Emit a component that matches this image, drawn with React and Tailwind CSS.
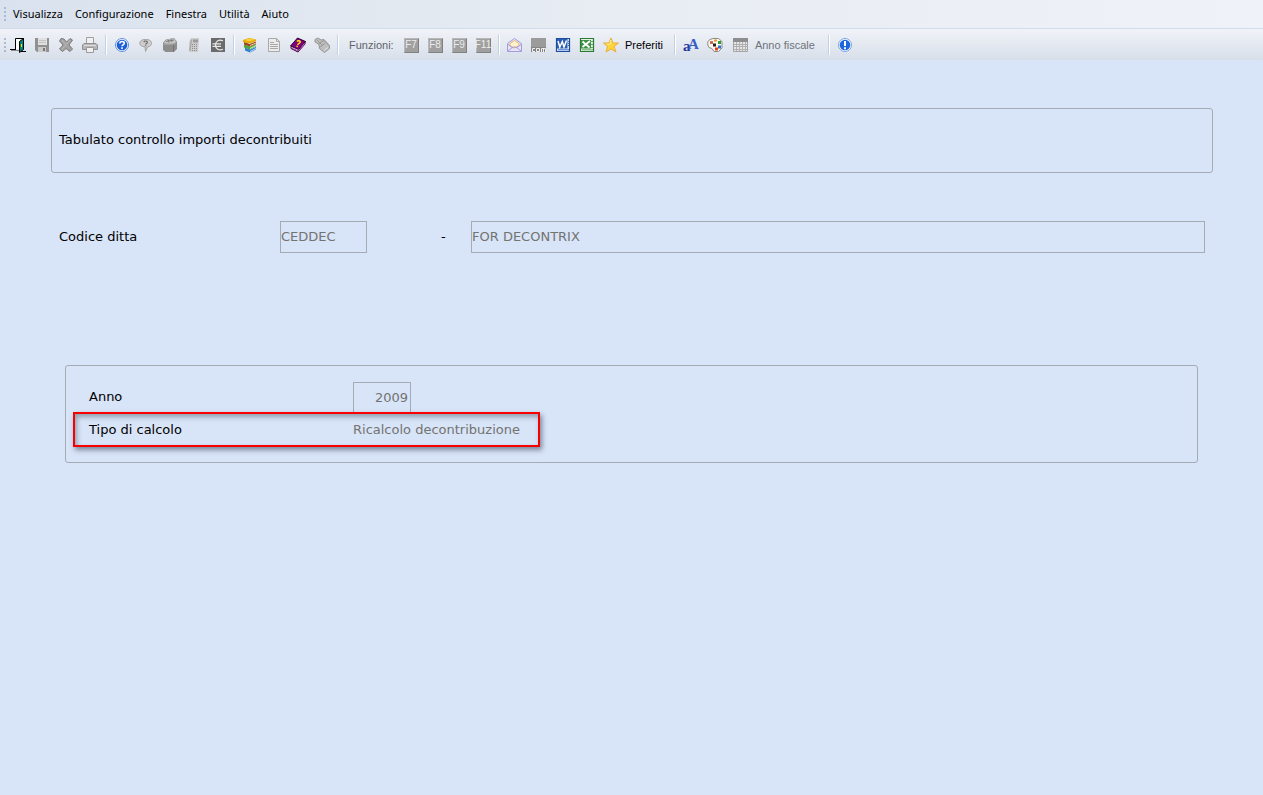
import React from 'react';
import clsx from 'clsx';

const MENU_ITEMS = ['Visualizza', 'Configurazione', 'Finestra', 'Utilità', 'Aiuto'];

/* Toolbar icons */

function Icon({ children }) {
  return (
    <svg className="w-4 h-4 shrink-0" viewBox="0 0 16 16" fill="none" aria-hidden="true">
      {children}
    </svg>
  );
}

const ExitIcon = () => (
  <Icon>
    <path d="M5 2h5v10H5z" fill="#fff" />
    <path d="M5.500 12V1.500h8V12" stroke="#000" />
    <path d="M0 12.500h6M11 14.500h5" stroke="#000" />
    <path d="M1 13.500h9" stroke="#8c8c8c" />
    <path d="M9.500 4.500 13.500 1.500V12.500L9.500 15.500Z" fill="#078080" stroke="#000" />
    <path d="M11 7h1v3h-1z" fill="#ffe800" />
  </Icon>
);

const SaveIcon = () => (
  <Icon>
    <path d="M1 1h14v14H3l-2-2Z" fill="#919191" />
    <path d="M4 1h9v7H4z" fill="#e0e0e0" />
    <path d="M4 10h8v5H4z" fill="#c9c9c9" />
    <path d="M9 11h2v3H9z" fill="#777" />
    <path d="M5 3.500h7M5 5.500h7" stroke="#c4c4c4" />
  </Icon>
);

const DeleteIcon = () => (
  <Icon>
    <path d="M3 1.500 6 2l2.500 3L12 1.500l2.500 1.500-3.500 5 3.500 4-2.500 2.500-4-3-3.500 3L1.500 12 5 8 1.500 4Z" fill="#a3a3a3" stroke="#7c7c7c" strokeLinejoin="round" />
    <path d="m4 3 4 5M12 3 4 12" stroke="#b8b8b8" />
  </Icon>
);

const PrintIcon = () => (
  <Icon>
    <path d="M4.500.5h7v6h-7z" fill="#f0f0f0" stroke="#a0a0a0" />
    <path d="M2 6.500h12l1.500 1.500V12.500H.5V8Z" fill="#b8b8b8" stroke="#909090" />
    <path d="M2 8.500h12" stroke="#ddd" />
    <path d="M4.500 10.500h7v5h-7z" fill="#f0f0f0" stroke="#999" />
  </Icon>
);

const HelpIcon = () => (
  <Icon>
    <circle cx="8" cy="8" r="6.500" fill="#fff" stroke="#5b8ce2" />
    <circle cx="8" cy="8" r="5.300" fill="#1d5fd6" />
    <path d="M5.800 6.500C5.800 3.900 10.300 4 10.300 6.300 10.300 8 8 7.800 8 9.300M8 10.300V12" stroke="#fff" strokeWidth="1.600" />
  </Icon>
);

const HintIcon = () => (
  <Icon>
    <path d="M7.500 2.500c4 0 6 1.300 6 3.800 0 2-1.500 3.200-4 3.700L7.500 14.500 7 10C3.500 9.500 1.800 8.300 1.800 6.300c0-2.500 2-3.800 5.700-3.800Z" fill="#cdcdcd" stroke="#a2a2a2" />
    <path d="M6 5.300C6 3.500 9.300 3.600 9.300 5.400 9.300 6.600 7.700 6.400 7.700 7.600M7.700 8.300v1" stroke="#666" strokeWidth="1.200" />
  </Icon>
);

const ArchiveIcon = () => (
  <Icon>
    <path d="M1 5.500 4 2.500 12 1l3 3.500V12l-3 3H3.500L1 13Z" fill="#8d8d8d" />
    <path d="m2 5.500 3-3 7-1 2 3-2.500 2H3.500Z" fill="#c6c6c6" />
    <path d="m4 4.500 8-1.500M6 2.500l1 3M9 2l1 3" stroke="#7b7b7b" />
    <path d="M1.500 7H11.500l3-2" stroke="#b5b5b5" />
    <path d="M11.500 7.500v7" stroke="#757575" />
  </Icon>
);

const PhoneIcon = () => (
  <Icon>
    <path d="M5 1h8v1l-1 13H4l-1-1V5Z" fill="#cdcdcd" />
    <path d="M7 2.500h5v3H7z" fill="#9b9b9b" />
    <path d="M5.500 2.500 3.800 14" stroke="#a8a8a8" strokeWidth="1.500" />
    <path d="M6 7.500h6M6 9.500h6M6 11.500h6M6 13.500h5" stroke="#8a8a8a" strokeDasharray="1 1" />
  </Icon>
);

const EuroIcon = () => (
  <Icon>
    <path d="M1 1h14v14H1z" fill="#6b6b6b" />
    <path d="M13 3.700C9 2 5.500 4 5.500 8s3.500 6 7.500 4.300M2.500 6.800h8.500M2.500 9.300h8.500" stroke="#e8e8e8" strokeWidth="1.200" />
  </Icon>
);

const BooksIcon = () => (
  <Icon>
    <path d="m3 10.500 5 2 6-2.500v2.500L8 15.500l-5-2Z" fill="#2f7fd0" />
    <path d="m8 14.500 6-3" stroke="#b9dcf5" />
    <path d="m2 7.500 6 2 6-2.500v2.500L8 12.500 2 10.500Z" fill="#4fa53c" />
    <path d="m8 11.500 6-3" stroke="#d9edc6" />
    <path d="m2 5 5.500 2L14 4.500V7L8 9.500 2 7.500Z" fill="#96421f" />
    <path d="m8 8.500 6-2.500" stroke="#f0cfa8" />
    <path d="m1 3 6-2 7 1.500V4L7.500 6.500 1 5Z" fill="#e5a900" />
    <path d="m2 3 5.500-1.500L13 2.700 7.500 4.500Z" fill="#f8cf3f" />
  </Icon>
);

const DocumentIcon = () => (
  <Icon>
    <path d="M2.500 1.500h8l3 3v10h-11Z" fill="#ececec" stroke="#a8a8a8" />
    <path d="M10.500 1.500v3h3M4 5.500h4M4 7.500h8M4 9.500h8M4 11.500h8" stroke="#a8a8a8" />
  </Icon>
);

const ManualIcon = () => (
  <Icon>
    <path d="M1 9.500v2L8 15l7-8V4.500" fill="#fff" stroke="#200020" />
    <path d="M.5 9 7.500 1l8 3.500L8.500 12.500Z" fill="#820082" stroke="#2c002c" />
    <path d="m1.500 11 7 3 6.500-7.500" stroke="#b02ab0" />
    <path d="M7 4.500c1-1.500 4-.7 3 1C9.500 6.500 8 6.300 7.800 7.800M7.300 8.700 7 10" stroke="#ffe500" strokeWidth="1.500" />
  </Icon>
);

const TagsIcon = () => (
  <Icon>
    <path d="M1 2.500 4 1l3 2 3-.5 5.500 6v3l-5 4-5-4L5 7.500 1 5Z" fill="#bebebe" stroke="#959595" />
    <path d="m5 6.500 5-3 5 5M6 10l5-3.500M3 3l5 5" stroke="#999" />
    <path d="m10 13.500 4-3" stroke="#e2e2e2" />
  </Icon>
);

const MailIcon = () => (
  <Icon>
    <path d="M.5 6.500 7.500 1.500l7 5v8H.5Z" fill="#e7e3fb" stroke="#a59cdc" strokeLinejoin="round" />
    <path d="M3 6.500 7.500 3.500l4.500 3v2.500l-4.500 2-4.500-2Z" fill="#fff2cd" stroke="#e5bb73" />
    <path d="m1 14 5-4h3l5 4M1 7.500 6 11M14 7.500 9 11" stroke="#a59cdc" />
  </Icon>
);

const ComIcon = () => (
  <Icon>
    <path d="M0 1h15v9H0z" fill="#9b9b9b" />
    <path d="M0 10h15v5H0z" fill="#858585" />
    <path d="M4 11.500H1.500v3H4M5.500 11.500h3v3h-3zM10.500 15v-3.500h4V15M12.500 11.500V15" stroke="#f0f0f0" />
  </Icon>
);

const WordIcon = () => (
  <Icon>
    <path d="M1.500 1.500h13v13h-13z" fill="#e9f0fb" stroke="#1d4c9c" strokeWidth="1.200" />
    <path d="M2 2h10.500v9.500H2z" fill="#2a5db4" />
    <path d="m3 4 1.800 6L7.300 4.500 9 10l2.500-6.500" stroke="#fff" strokeWidth="1.500" />
    <path d="M13 4.500h1M13 6.500h1M13 8.500h1M3 12.800h11" stroke="#3c6fc0" />
  </Icon>
);

const ExcelIcon = () => (
  <Icon>
    <path d="M1.500 1.500h13v13h-13z" fill="#e4f3e2" stroke="#2c7b35" strokeWidth="1.200" />
    <path d="M2 3h10v8.500H2z" fill="#3f9147" />
    <path d="m3.500 4.500 7 6M11 4 3.500 10" stroke="#fff" strokeWidth="1.800" />
    <path d="M12 4.500h2M12 7.500h2M12 10.500h2M3 12.800h11" stroke="#69aa6b" />
  </Icon>
);

const StarIcon = () => (
  <Icon>
    <path d="m8 1 2 5h5.500L11 9.500l2 5.500-5-3-5 3 1.500-5.500L.5 6H6Z" fill="#ffd53b" stroke="#eaae3a" strokeLinejoin="round" />
    <path d="m8 3-1 4-3 .5" stroke="#fff1a0" />
  </Icon>
);

const FontIcon = () => (
  <Icon>
    <text x="0" y="14" fontFamily="Liberation Serif, serif" fontSize="15" fontWeight="bold" fill="#24389e">a</text>
    <text x="5" y="12" fontFamily="Liberation Serif, serif" fontSize="15" fontWeight="bold" fill="#3a5cc4">A</text>
  </Icon>
);

const PaletteIcon = () => (
  <Icon>
    <path d="M6 1.500h5.500L15 4.500v6.500l-3.500 3.500H7L5 11.500l-3-1L.8 8V4.500L3 2.500Z" fill="#fbf8ee" stroke="#8b8b86" />
    <path d="M7 2.500h3v2H7z" fill="#f0932b" />
    <path d="M11 4h3v3h-3z" fill="#2f9d3a" />
    <path d="M3 4h3v3H3z" fill="#d06a5c" />
    <path d="M11 8.500h3v3h-3z" fill="#2e6fd0" />
    <path d="M8 10.500h3v3H8z" fill="#e6401f" />
    <path d="M6 6.500h3v3H6z" fill="#222" />
  </Icon>
);

const CalendarIcon = () => (
  <Icon>
    <path d="M.5 2.500h14v12H.5z" fill="#e6e6e6" stroke="#a4a4a4" />
    <path d="M0 1h15v4H0z" fill="#8d8d8d" />
    <path d="M1 7.500h13M1 9.500h13M1 12.500h13M3.500 5v9M6.500 5v9M9.500 5v9M12.500 5v9" stroke="#b0b0b0" />
  </Icon>
);

const InfoIcon = () => (
  <Icon>
    <circle cx="8" cy="8" r="6.500" fill="#fff" stroke="#7ba3e6" />
    <circle cx="8" cy="8" r="5.300" fill="#1d66dc" />
    <path d="M8 4v5M8 10.300v1.900" stroke="#fff" strokeWidth="2" />
  </Icon>
);

/* Toolbar parts */

function ToolButton({ label, disabled, children }) {
  return (
    <button type="button" aria-label={label} disabled={disabled} className="w-6 h-6 flex items-center justify-center">
      {children}
    </button>
  );
}

function TextToolButton({ label, disabled, icon, className }) {
  return (
    <button
      type="button"
      disabled={disabled}
      className={clsx('h-6 flex items-center gap-1.5 whitespace-nowrap', disabled ? 'text-[#6f747b]' : 'text-black', className)}
    >
      {icon}
      {label}
    </button>
  );
}

function FunctionKey({ label }) {
  return (
    <button type="button" disabled className="w-6 h-6 flex items-center justify-center">
      <span className="w-[15px] h-[15px] flex items-center justify-center bg-[#a0a0a0] border border-t-[#b8b8b8] border-l-[#b8b8b8] border-[#808080] font-['Liberation_Sans_Narrow','Liberation_Sans',sans-serif] text-[10px] leading-none text-[#ececec]">
        {label}
      </span>
    </button>
  );
}

function Separator() {
  return <div className="w-0.5 h-5 mx-[3px] shrink-0 bg-[#c3d0e0] border-r border-white" />;
}

function Grip() {
  return (
    <div className="flex flex-col gap-0.5 w-0.5 ml-1 shrink-0">
      {[0, 1, 2, 3].map((dot) => (
        <span key={dot} className="w-0.5 h-0.5 bg-[#a9bcd3]" />
      ))}
    </div>
  );
}

function MenuBar() {
  return (
    <nav className="h-7 flex items-center bg-linear-to-r from-[#d9e2ee] via-[#e8edf3] to-[#eff2f8] font-['Noto_Sans',sans-serif] text-[11px] text-black">
      <Grip />
      <div className="flex pl-px">
        {MENU_ITEMS.map((item) => (
          <button key={item} type="button" className="px-1.5">
            {item}
          </button>
        ))}
      </div>
    </nav>
  );
}

function Toolbar() {
  return (
    <div
      role="toolbar"
      className="h-8 pt-px flex items-center border-t border-[#d3dde9] bg-linear-to-b from-[#f0f3f8] to-[#d8dfea] font-['Liberation_Sans',Arial,sans-serif] text-[11px]"
    >
      <Grip />
      <ToolButton label="Esci"><ExitIcon /></ToolButton>
      <ToolButton label="Salva" disabled><SaveIcon /></ToolButton>
      <ToolButton label="Elimina" disabled><DeleteIcon /></ToolButton>
      <ToolButton label="Stampa" disabled><PrintIcon /></ToolButton>
      <Separator />
      <ToolButton label="Guida"><HelpIcon /></ToolButton>
      <ToolButton label="Suggerimento" disabled><HintIcon /></ToolButton>
      <ToolButton label="Archivio" disabled><ArchiveIcon /></ToolButton>
      <ToolButton label="Calcolatrice" disabled><PhoneIcon /></ToolButton>
      <ToolButton label="Euro" disabled><EuroIcon /></ToolButton>
      <Separator />
      <ToolButton label="Libreria"><BooksIcon /></ToolButton>
      <ToolButton label="Documento" disabled><DocumentIcon /></ToolButton>
      <ToolButton label="Manuale"><ManualIcon /></ToolButton>
      <ToolButton label="Etichette" disabled><TagsIcon /></ToolButton>
      <Separator />
      <span className="w-[57px] pl-[7px] text-[#5f646b]">Funzioni:</span>
      <FunctionKey label="F7" />
      <FunctionKey label="F8" />
      <FunctionKey label="F9" />
      <FunctionKey label="F11" />
      <Separator />
      <ToolButton label="Posta"><MailIcon /></ToolButton>
      <ToolButton label="Com" disabled><ComIcon /></ToolButton>
      <ToolButton label="Word"><WordIcon /></ToolButton>
      <ToolButton label="Excel"><ExcelIcon /></ToolButton>
      <TextToolButton label="Preferiti" icon={<StarIcon />} className="pl-1 pr-2" />
      <Separator />
      <ToolButton label="Carattere"><FontIcon /></ToolButton>
      <ToolButton label="Colori"><PaletteIcon /></ToolButton>
      <TextToolButton label="Anno fiscale" icon={<CalendarIcon />} disabled className="pl-1.5 pr-2.5" />
      <Separator />
      <ToolButton label="Informazioni"><InfoIcon /></ToolButton>
    </div>
  );
}

/* Form */

const fieldClass = 'h-8 pb-0.5 bg-transparent border border-[#a5abb2] text-[#73736f] outline-none';

export default function App() {
  return (
    <div className="min-h-screen bg-[#d8e4f8] font-['DejaVu_Sans',Verdana,sans-serif] text-[13px] text-black">
      <MenuBar />
      <Toolbar />

      <main className="pt-12 pl-[51px] pr-[50px]">
        <h1 className="h-[65px] px-[7px] pb-0.5 flex items-center border border-[#a5abb2] rounded-[3px]">
          Tabulato controllo importi decontribuiti
        </h1>

        <div className="mt-12 px-2 flex items-center">
          <label htmlFor="codice" className="w-[221px]">Codice ditta</label>
          <input id="codice" readOnly defaultValue="CEDDEC" className={clsx(fieldClass, 'w-[87px]')} />
          <span className="w-[104px] pl-[74px]">-</span>
          <input aria-label="Ragione sociale" readOnly defaultValue="FOR DECONTRIX" className={clsx(fieldClass, 'flex-1 min-w-0')} />
        </div>

        <section className="mt-28 ml-3.5 mr-[15px] pt-4 pb-[15px] px-[7px] border border-[#a5abb2] rounded-[3px]">
          <div className="pl-4 flex items-center">
            <label htmlFor="anno" className="w-[264px] pb-0.5">Anno</label>
            <input id="anno" readOnly defaultValue="2009" className={clsx(fieldClass, 'w-[58px] pr-0.5 text-right')} />
          </div>
          {/* Highlighted row */}
          <div className="relative -mt-0.5 w-[467px] h-[35px] pl-3.5 flex items-center border-2 border-[#f80000] shadow-[2px_3px_5px_rgba(60,70,90,0.6),inset_2px_3px_5px_rgba(60,70,90,0.45)]">
            <label htmlFor="tipo" className="w-[264px]">Tipo di calcolo</label>
            <input id="tipo" readOnly defaultValue="Ricalcolo decontribuzione" className="flex-1 min-w-0 bg-transparent text-[#73736f] outline-none" />
          </div>
        </section>
      </main>
    </div>
  );
}
